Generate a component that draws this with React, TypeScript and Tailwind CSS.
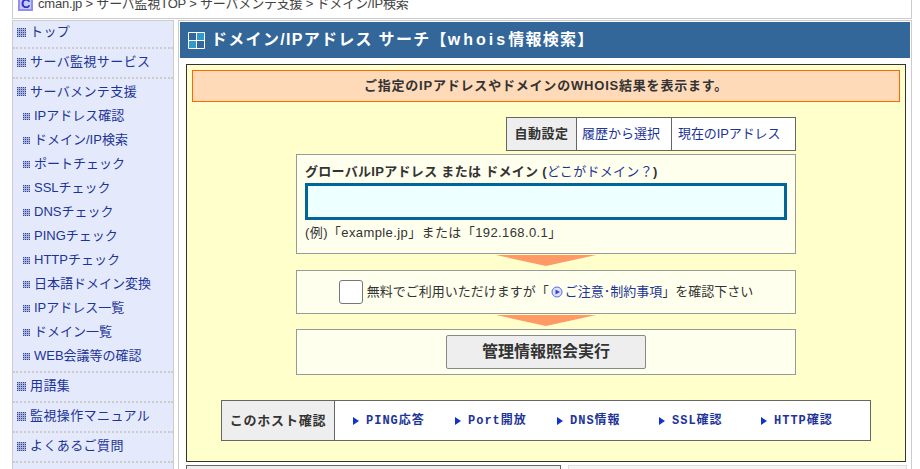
const FONT = 'font-["Liberation_Sans","Noto_Sans_CJK_JP",sans-serif]'

const SUB_ITEMS = [
  'IPアドレス確認',
  'ドメイン/IP検索',
  'ポートチェック',
  'SSLチェック',
  'DNSチェック',
  'PINGチェック',
  'HTTPチェック',
  '日本語ドメイン変換',
  'IPアドレス一覧',
  'ドメイン一覧',
  'WEB会議等の確認',
]

const HOST_LINKS = ['PING応答', 'Port開放', 'DNS情報', 'SSL確認', 'HTTP確認']

function DotIcon({ size = 9 }: { size?: number }) {
  const dots = []
  for (let y = 0; y < size; y += 2) {
    for (let x = 0; x < size; x += 2) {
      dots.push(<rect key={`${x}-${y}`} x={x} y={y} width="1" height="1" fill="#33449a" />)
    }
  }
  return (
    <svg width={size} height={size} className="shrink-0">
      <rect width={size} height={size} fill="#a9b3dc" />
      {dots}
    </svg>
  )
}

function Arrow() {
  return (
    <div className="flex justify-center h-[11px] mt-px">
      <svg width="100" height="11">
        <polygon points="0,0 100,0 50,11" fill="#ff9966" />
      </svg>
    </div>
  )
}

function Separator() {
  return <div className="h-[2px] border-t-2 border-dotted border-[#cccccc]" />
}

function TopItem({ label, first }: { label: string; first?: boolean }) {
  return (
    <div className={`flex items-center pl-1 gap-1 text-[13px] tracking-[0.4px] text-[#1d3497] ${first ? 'h-[26px] pb-1' : 'h-7 pb-[2px]'}`}>
      <DotIcon />
      <span>{label}</span>
    </div>
  )
}

export default function App() {
  return (
    <div className={`${FONT} h-[469px] w-[920px] overflow-hidden bg-white text-[13px] text-[#333333]`}>
      <div className="ml-3 mr-2 h-[19px] flex items-end gap-[5px] overflow-hidden border-x border-b border-[#cccccc] pl-[5px] pb-[7px]">
        <svg width="15" height="15" className="shrink-0">
          <rect width="15" height="15" fill="#8f8fef" />
          <rect x="2" y="1" width="11" height="12" fill="#c9c9fb" />
          <text x="3" y="12" fontSize="13" fontWeight="700" fill="#2c2cc0">C</text>
        </svg>
        <span className="leading-[14px] whitespace-nowrap tracking-[-0.2px] text-[#444444]">
          cman.jp &gt; サーバ監視TOP &gt; サーバメンテ支援 &gt; ドメイン/IP検索
        </span>
      </div>

      <div className="mt-px ml-3 flex items-start">
        <nav className="w-[162px] h-[460px] shrink-0 border-x border-t border-[#cccccc] bg-[#e4eafc]">
          <TopItem label="トップ" first />
          <Separator />
          <TopItem label="サーバ監視サービス" />
          <Separator />
          <div className="h-[292px]">
            <div className="h-[25px] flex items-center pl-1 gap-1 tracking-[0.4px] text-[#1d3497]">
              <DotIcon />
              <span>サーバメンテ支援</span>
            </div>
            {SUB_ITEMS.map(item => (
              <div key={item} className="h-6 flex items-center pl-[10px] gap-1 text-[#1d3497]">
                <DotIcon size={7} />
                <span>{item}</span>
              </div>
            ))}
          </div>
          <Separator />
          <TopItem label="用語集" />
          <Separator />
          <TopItem label="監視操作マニュアル" />
          <Separator />
          <TopItem label="よくあるご質問" />
          <Separator />
        </nav>

        <main className="ml-1 w-[734px] h-[460px] shrink-0 border-x border-t border-[#cccccc] pt-px pl-px pr-px">
          <div className="h-9 flex items-center gap-[6px] bg-[#336699] pl-2 text-white">
            <svg width="17" height="17" className="shrink-0">
              <rect x="1" y="1" width="7" height="7" fill="#336699" />
              <rect x="9" y="1" width="7" height="7" fill="#3399cc" />
              <rect x="1" y="9" width="7" height="7" fill="#3399cc" />
              <rect x="9" y="9" width="7" height="7" fill="#336699" />
              <path d="M.5.5h16v16H.5zM8.5 0v17M0 8.5h17" fill="none" stroke="#ffffff" />
            </svg>
            <h1 className="text-[16px] font-bold tracking-[1.3px] whitespace-nowrap">
              ドメイン/IPアドレス サーチ【<span className="tracking-[3px]">whois</span>情報検索】
            </h1>
          </div>

          <div className="mt-[6px] ml-[6px] w-[720px] h-[398px] border border-[#333333] bg-[#ffffcc] pt-[5px] px-[5px]">
            <div className="h-8 flex items-center justify-center border border-[#ff6600] bg-[#ffdab9] text-[13px] font-bold tracking-[0.8px]">
              ご指定のIPアドレスやドメインのWHOIS結果を表示ます。
            </div>

            <div className="ml-[104px] w-[500px]">
              <div className="mt-[15px] ml-[210px] h-[34px] w-[290px] flex border border-[#666666] bg-white">
                <div className="w-[70px] flex items-center justify-center border-r border-[#666666] bg-[#eeeeee] font-bold tracking-[0.5px]">自動設定</div>
                <div className="w-[95px] flex items-center pl-[5px] border-r border-[#666666] text-[#1d3497]">履歴から選択</div>
                <div className="flex-1 flex items-center pl-[6px] tracking-[-0.1px] text-[#1d3497]">現在のIPアドレス</div>
              </div>

              <div className="mt-[3px] h-[100px] border border-[#999999] bg-[#ffffee] px-2 pt-2">
                <div className="h-[20px] leading-[18px] font-bold tracking-[0.3px]">
                  グローバルIPアドレス または ドメイン (<span className="font-normal text-[#1d3497]">どこがドメイン？</span>)
                </div>
                <input className="block w-[482px] h-[37px] border-[3px] border-[#006699] bg-[#eeffff]" />
                <div className="mt-[5px] leading-[16px] tracking-[0.4px]">(例)「example.jp」または「192.168.0.1」</div>
              </div>

              <Arrow />

              <div className="mt-1 h-[44px] flex items-center justify-center gap-[2px] border border-[#999999] bg-[#ffffee]">
                <div className="w-6 h-6 rounded-[3px] border border-[#777777] bg-white" />
                <span className="ml-[2px]">無料でご利用いただけますが「</span>
                <svg width="12" height="12" className="shrink-0">
                  <circle cx="6" cy="6" r="5" fill="#dfe3ff" stroke="#5566ee" />
                  <polygon points="4.5,3.5 9,6 4.5,8.5" fill="#3344dd" />
                </svg>
                <span>
                  <span className="text-[#1d3497]">ご注意･制約事項</span>」を確認下さい
                </span>
              </div>

              <Arrow />

              <div className="mt-[3px] h-[46px] flex items-center justify-center border border-[#999999] bg-[#ffffee]">
                <button className="w-[200px] h-[34px] rounded-[2px] border border-[#888888] bg-[#eeeeee] text-[16px] font-bold text-[#333333]">
                  管理情報照会実行
                </button>
              </div>
            </div>

            <div className="mt-[25px] ml-[29px] h-[41px] w-[650px] flex border border-[#666666] bg-white">
              <div className="w-[113px] flex items-center justify-center border-r border-[#666666] bg-[#eeeeee] font-bold tracking-[0.8px]">このホスト確認</div>
              <div className="flex items-center pl-[18px]">
                {HOST_LINKS.map(link => (
                  <div key={link} className='w-[102px] flex items-center gap-[7px] font-["Liberation_Mono","Noto_Sans_CJK_JP",monospace] text-[12px] font-bold tracking-[1px] text-[#1d3497]'>
                    <svg width="6" height="8" className="shrink-0">
                      <polygon points="0,0 6,4 0,8" fill="#1133cc" />
                    </svg>
                    <span>{link}</span>
                  </div>
                ))}
              </div>
            </div>
          </div>

          <div className="mt-[3px] ml-[6px] flex gap-[7px]">
            <div className="w-[375px] h-3 border border-[#666666] bg-[#eeeeee]" />
            <div className="w-[339px] h-3 border border-[#dddddd] bg-[#f4f4f4]" />
          </div>
        </main>
      </div>
    </div>
  )
}
